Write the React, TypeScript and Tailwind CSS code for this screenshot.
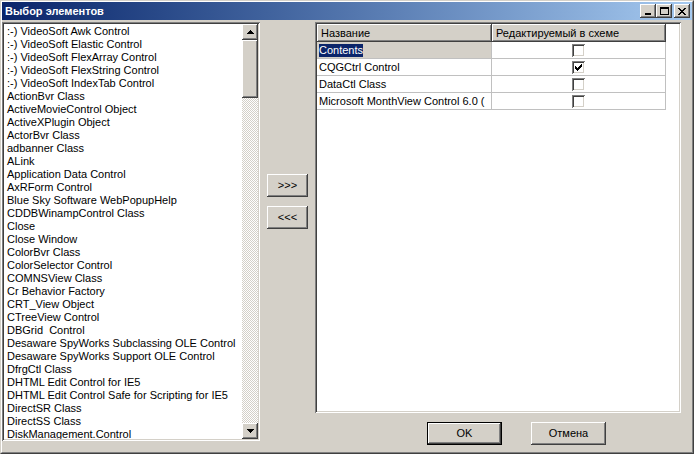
import React from "react";

const items = [
  ":-) VideoSoft Awk Control",
  ":-) VideoSoft Elastic Control",
  ":-) VideoSoft FlexArray Control",
  ":-) VideoSoft FlexString Control",
  ":-) VideoSoft IndexTab Control",
  "ActionBvr Class",
  "ActiveMovieControl Object",
  "ActiveXPlugin Object",
  "ActorBvr Class",
  "adbanner Class",
  "ALink",
  "Application Data Control",
  "AxRForm Control",
  "Blue Sky Software WebPopupHelp",
  "CDDBWinampControl Class",
  "Close",
  "Close Window",
  "ColorBvr Class",
  "ColorSelector Control",
  "COMNSView Class",
  "Cr Behavior Factory",
  "CRT_View Object",
  "CTreeView Control",
  "DBGrid\u00a0 Control",
  "Desaware SpyWorks Subclassing OLE Control",
  "Desaware SpyWorks Support OLE Control",
  "DfrgCtl Class",
  "DHTML Edit Control for IE5",
  "DHTML Edit Control Safe for Scripting for IE5",
  "DirectSR Class",
  "DirectSS Class",
  "DiskManagement.Control",
];

const rows = [
  { name: "Contents", checked: false, selected: true },
  { name: "CQGCtrl Control", checked: true, selected: false },
  { name: "DataCtl Class", checked: false, selected: false },
  { name: "Microsoft MonthView Control 6.0 (", checked: false, selected: false },
];

const raised =
  "shadow-[inset_-1px_-1px_#404040,inset_1px_1px_#ffffff,inset_-2px_-2px_#808080,inset_2px_2px_#d4d0c8]";
const sunken =
  "shadow-[inset_1px_1px_#808080,inset_-1px_-1px_#ffffff,inset_2px_2px_#404040,inset_-2px_-2px_#d4d0c8]";

function Checkbox({ checked }: { checked: boolean }) {
  return (
    <div className={`w-[13px] h-[13px] bg-white flex items-center justify-center ${sunken}`}>
      {checked && (
        <svg width="7" height="7" viewBox="0 0 7 7" shapeRendering="crispEdges">
          <path d="M0 2h1v3h-1zM1 3h1v3h-1zM2 4h1v3h-1zM3 3h1v3h-1zM4 2h1v3h-1zM5 1h1v3h-1zM6 0h1v3h-1z" fill="#000" />
        </svg>
      )}
    </div>
  );
}

function Arrow({ down }: { down?: boolean }) {
  return (
    <div className={`w-[16px] h-[16px] bg-[#d4d0c8] flex items-center justify-center ${raised}`}>
      <svg width="7" height="4" viewBox="0 0 7 4" shapeRendering="crispEdges">
        {down ? (
          <path d="M0 0h7v1h-1v1h-1v1h-1v1h-1v-1h-1v-1h-1v-1h-1z" fill="#000" />
        ) : (
          <path d="M3 0h1v1h1v1h1v1h1v1h-7v-1h1v-1h1v-1h1z" fill="#000" />
        )}
      </svg>
    </div>
  );
}

function TitleBtn({ children }: { children: React.ReactNode }) {
  return (
    <div className={`w-[16px] h-[14px] bg-[#d4d0c8] flex items-center justify-center ${raised}`}>
      {children}
    </div>
  );
}

function Btn({ label, def }: { label: string; def?: boolean }) {
  return (
    <div className={`w-[75px] h-[23px] ${def ? "border border-black" : ""}`}>
      <div
        className={`w-full h-full bg-[#d4d0c8] flex items-center justify-center text-[11px] text-black ${raised}`}
      >
        {label}
      </div>
    </div>
  );
}

export default function App() {
  return (
    <div
      className="w-[694px] h-[454px] bg-[#d4d0c8] border border-t-[#d4d0c8] border-l-[#d4d0c8] border-r-[#404040] border-b-[#404040] overflow-hidden"
      style={{ fontFamily: '"Liberation Sans", Arial, sans-serif' }}
    >
      <div className="w-full h-full border border-t-white border-l-white border-r-[#808080] border-b-[#808080] flex flex-col">
        {/* Title bar */}
        <div className="h-[18px] flex items-center bg-gradient-to-r from-[#0a246a] to-[#a6caf0] pl-[3px] pr-[2px] shrink-0">
          <span className="text-white font-bold text-[11px] leading-none flex-1 pt-[1px]">Выбор элементов</span>
          <div className="flex items-center">
            <TitleBtn>
              <div className="w-[6px] h-[2px] bg-black mt-[6px] -ml-[1px]" />
            </TitleBtn>
            <TitleBtn>
              <div className="w-[9px] h-[8px] border border-black border-t-2" />
            </TitleBtn>
            <div className="w-[2px]" />
            <TitleBtn>
              <svg width="8" height="7" viewBox="0 0 8 7" shapeRendering="crispEdges">
                <path d="M0 0h2v1h1v1h2v-1h1v-1h2v1h-1v1h-1v1h-1v1h1v1h1v1h1v1h-2v-1h-1v-1h-2v1h-1v1h-2v-1h1v-1h1v-1h1v-1h-1v-1h-1v-1h-1z" fill="#000" />
              </svg>
            </TitleBtn>
          </div>
        </div>

        {/* Content */}
        <div className="flex pt-[2px] text-[11px] text-black">
          {/* Left list */}
          <div className={`w-[258px] h-[419px] bg-white p-[2px] flex ${sunken}`}>
            <div className="flex-1 overflow-hidden pl-[3px] pt-[1px]">
              {items.map((t) => (
                <div key={t} className="h-[13px] leading-[13px] whitespace-pre">
                  {t}
                </div>
              ))}
            </div>
            <div className="w-[16px] flex flex-col">
              <Arrow />
              <div className={`h-[58px] bg-[#d4d0c8] ${raised}`} />
              <div className="flex-1 bg-[repeating-conic-gradient(#ffffff_0_25%,#d4d0c8_0_50%)] bg-[length:2px_2px]" />
              <Arrow down />
            </div>
          </div>

          {/* Middle buttons */}
          <div className="w-[55px] flex flex-col items-center pt-[152px] gap-[9px]">
            <div className={`w-[41px] h-[23px] bg-[#d4d0c8] flex items-center justify-center ${raised}`}>
              &gt;&gt;&gt;
            </div>
            <div className={`w-[41px] h-[23px] bg-[#d4d0c8] flex items-center justify-center ${raised}`}>
              &lt;&lt;&lt;
            </div>
          </div>

          {/* Right */}
          <div className="w-[366px] flex flex-col">
            <div className={`h-[391px] bg-white p-[2px] ${sunken}`}>
              <div className="flex h-[18px]">
                <div className={`w-[175px] bg-[#d4d0c8] pl-[4px] leading-[18px] ${raised}`}>Название</div>
                <div className={`w-[174px] bg-[#d4d0c8] pl-[4px] leading-[18px] ${raised}`}>
                  Редактируемый в схеме
                </div>
              </div>
              {rows.map((r) => (
                <div key={r.name} className="flex h-[17px]">
                  <div
                    className={`w-[175px] border-r border-b border-[#c0c0c0] pl-[2px] flex items-center whitespace-nowrap overflow-hidden ${
                      r.selected ? "bg-[#d4d0c8]" : ""
                    }`}
                  >
                    <span className={r.selected ? "bg-[#0a246a] text-white leading-[13px]" : "leading-[13px]"}>
                      {r.name}
                    </span>
                  </div>
                  <div className="w-[174px] border-r border-b border-[#c0c0c0] flex items-center justify-center">
                    <Checkbox checked={r.checked} />
                  </div>
                </div>
              ))}
            </div>
            <div className="flex pl-[112px] gap-[29px] pt-[9px]">
              <Btn label="OK" def />
              <Btn label="Отмена" />
            </div>
          </div>
        </div>
      </div>
    </div>
  );
}
